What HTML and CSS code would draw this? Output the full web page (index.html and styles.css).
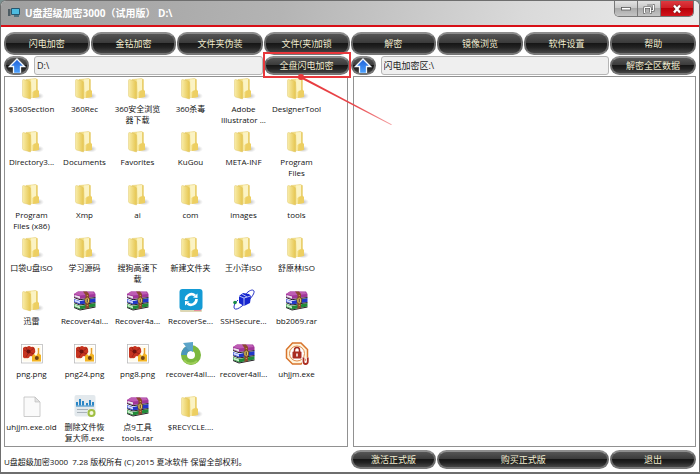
FILE: index.html
```html
<!DOCTYPE html>
<html lang="zh-CN">
<head>
<meta charset="utf-8">
<title>U盘超级加密3000</title>
<link rel="stylesheet" href="styles.css">
</head>
<body>
<svg class="defs" aria-hidden="true">
  <defs>
    <linearGradient id="gf" x1="0" x2="1"><stop offset="0" stop-color="#f9edaa"/><stop offset="1" stop-color="#e6c650"/></linearGradient>
    <linearGradient id="gb" x1="0" x2="1"><stop offset="0" stop-color="#eccf62"/><stop offset=".5" stop-color="#f8e9a0"/><stop offset="1" stop-color="#e8cb62"/></linearGradient>
    <linearGradient id="ga" x1="0" y1="0" x2="0" y2="1"><stop offset="0" stop-color="#1c5fd8"/><stop offset="1" stop-color="#4fa4ff"/></linearGradient>
    <linearGradient id="gl" x1="0" x2="1"><stop offset="0" stop-color="#e8383c"/><stop offset=".6" stop-color="#e8484c"/><stop offset="1" stop-color="#f4a0a2"/></linearGradient>
    <radialGradient id="gs"><stop offset="0" stop-color="#999" stop-opacity=".7"/><stop offset="1" stop-color="#bbb" stop-opacity="0"/></radialGradient>
  </defs>
  <symbol id="folder" viewBox="0 0 24 24">
    <ellipse cx="18" cy="19" rx="6" ry="3.500" fill="url(#gs)"/>
    <path d="M6 2.500L15.500 1.500L17.500 2.500V20L8 21Z" fill="url(#gb)" stroke="#e2c968" stroke-width=".4"/>
    <path d="M11 2.500L16 2V14L12 15Z" fill="#fbf3c4"/>
    <path d="M13.500 14L17.500 12.500L19 14V20L13 21Z" fill="#edcf62"/>
    <path d="M2.500 3.500Q2.500 2.500 3.500 2.500L9.500 4Q10.500 4.500 10.500 5.500V22L3.500 20Q2.500 19.500 2.500 18.500Z" fill="url(#gf)" stroke="#dcc05a" stroke-width=".4"/>
  </symbol>
  <symbol id="rar" viewBox="0 0 24 24">
    <path d="M1 5L5 2.500L21 2.500L22.500 5V8L7 10L1 8Z" fill="#a0369a"/><path d="M1 5L7 6.500L22 5L20 3L5 2.500Z" fill="#be5cb4"/><path d="M1.500 6L7 7.500V9.500L1.500 7.500Z" fill="#eee"/>
    <path d="M1 10L7 12L22.500 9V13L7 15.500L1 13Z" fill="#2137c8"/><path d="M1.500 10.500L7 12.500V14.500L1.500 12.500Z" fill="#d4dcff"/>
    <path d="M1 15L7 17L22.500 14V17.500L7 20.500L1 18Z" fill="#218b38"/><path d="M1.500 15.500L7 17.500V19.500L1.500 17.500Z" fill="#caf0ca"/>
    <path d="M1 8.500L7 10.700L22.500 8.500M1 13.700L7 16L22.500 13.500M1 18.500L7 21L22.500 18" fill="none" stroke="#242226" stroke-width="1"/>
    <path d="M10 2.500L14 2.500L16 5V19L12.500 20V6Z" fill="#8c4a2e"/><path d="M14.300 6V18" stroke="#d8ac50" stroke-width="1" stroke-dasharray="1 1"/>
    <rect x="12" y="9" width="4.500" height="5" rx="1" fill="#e8c55e" stroke="#5b381d" stroke-width=".7"/><path d="M14.200 10V13" stroke="#333"/>
  </symbol>
  <symbol id="png" viewBox="0 0 24 24">
    <rect x="1.500" y="2.500" width="21" height="18.500" fill="#fff" stroke="#b4b4b4" stroke-width=".7"/><rect x="3" y="4" width="18" height="15.500" fill="#fffbed"/>
    <path d="M3 6Q5 4 7 5Q9 3 11 5Q14 4 15 7Q16 10 14 12Q13 15 10 14Q9 17 6 16Q4 17 3 15Z" fill="#c63420"/><path d="M4 8L8 10L6 5M14 6L9 10L14 12M9 10L6 15" stroke="#8d1c14" stroke-width=".7" fill="none"/><circle cx="8.500" cy="9.500" r="2" fill="#6f120f"/>
    <path d="M12 14L14 12L16 14L18 11L21 13V19.500H12Z" fill="#f2b322"/><path d="M18.500 6V12" stroke="#e99e28" stroke-width="1.500"/><circle cx="16.800" cy="16" r="2" fill="#6f4318"/>
  </symbol>
  <symbol id="sync" viewBox="0 0 24 24">
    <rect x="1" y="20" width="22" height="3" rx="1" fill="#ddd7b4"/><path d="M15 21.500H22" stroke="#e68f9c"/>
    <rect x=".5" y="0" width="23" height="21" rx="3" fill="#149bd5"/><path d="M7 11A5.500 5.500 0 0 1 16 6.500M17.500 10A5.500 5.500 0 0 1 8.500 14.500" fill="none" stroke="#fff" stroke-width="2.600"/><path d="M14 8.500L18.500 9V4.500ZM10.500 12.500L6 12V16.500Z" fill="#fff"/>
  </symbol>
  <symbol id="ssh" viewBox="0 0 24 24">
    <path d="M13 6C17 1 21 0 22 2C23 5 17 12 10 17C5 21 2 21 2 18C2 15 4 13 6 11" fill="none" stroke="#2430c4" stroke-width="1"/>
    <path d="M7 7L11 4L17 5L19 7L18 14L12 17L7 14Z" fill="#1726cf"/><path d="M7 7L12 9L18.500 7M12 9V17M10 5L15 8" fill="none" stroke="#dbe4ff" stroke-width=".8"/><circle cx="3" cy="13.500" r="1.800" fill="#188c46"/>
  </symbol>
  <symbol id="ring" viewBox="0 0 24 24">
    <circle cx="12" cy="13" r="7" fill="none" stroke="#7cb83e" stroke-width="6"/><path d="M5 13A7 7 0 0 1 12 6" fill="none" stroke="#4b95bb" stroke-width="6"/><path d="M4 1L14 0L14 10L9 7.500Z" fill="#5ba4c8"/><path d="M5 18A8.500 8.500 0 0 0 18 19" fill="none" stroke="#9dce58" stroke-width="2"/>
  </symbol>
  <symbol id="lock" viewBox="0 0 24 24">
    <path d="M7.500 1H16L22.500 7.500V16L16 22H7.500L1.500 16V7.500Z" fill="#fff4dc" stroke="#d8742c" stroke-width="1.500"/><circle cx="12" cy="11.500" r="7.500" fill="#fff" stroke="#e08b4b"/>
    <path d="M9.500 10V8A2.500 2.500 0 0 1 14.500 8V10" fill="none" stroke="#a32c20" stroke-width="1.500"/><rect x="7.500" y="9.500" width="9" height="7" rx="1" fill="#a82d22"/><path d="M12 11.500V14.500" stroke="#fff" stroke-width="1.500"/>
    <path d="M18.500 15.500V19.500Q18.500 22 20.500 22Q22.800 22 22.800 19.500V15.500" fill="none" stroke="#fff" stroke-width="3.500"/><path d="M18.500 15.500V19.500Q18.500 22 20.500 22Q22.800 22 22.800 19.500V15.500" fill="none" stroke="#ac2e22" stroke-width="1.800"/>
  </symbol>
  <symbol id="doc" viewBox="0 0 24 24">
    <path d="M4 2H15L20 7V21.500H4Z" fill="#fafafa" stroke="#bfbfbf" stroke-width=".8"/><path d="M15 2V7H20Z" fill="#e2e2e2" stroke="#bfbfbf" stroke-width=".7"/>
  </symbol>
  <symbol id="chart" viewBox="0 0 24 24">
    <rect x="1.500" y="0" width="21" height="21.500" rx="2" fill="#e3e9ed"/><path d="M4 10.500V7M7 10.500V4M10 10.500V6M14 10.500V8M17 10.500V5M20 10.500V7" stroke="#2b86c6" stroke-width="2"/><path d="M3 11H21" stroke="#2b86c6"/><path d="M4 14.500H15M4 17.500H14" stroke="#a9b3ba" stroke-width="1"/><circle cx="18.500" cy="18" r="3" fill="#f5f7df" stroke="#a0bf42" stroke-width="2"/>
  </symbol>
  <symbol id="up" viewBox="0 0 18 16">
    <path d="M9 1L16.500 8.500H12.500V15.500H5.500V8.500H1.500Z" fill="url(#ga)" stroke="#f2f8ff" stroke-width="1.300"/>
  </symbol>
</svg>

<div class="window">
  <header class="titlebar">
    <svg class="app-icon" viewBox="0 0 12 10"><rect x="3" y="0" width="9" height="7" rx="1" fill="#27576f"/><rect x="4" y="1" width="7" height="5" fill="#4dbbe0"/><path d="M6 8H11" stroke="#356273" stroke-width="1.500"/><rect x="0" y="1" width="2.500" height="7" fill="#4e5c63"/></svg>
    <h1>U盘超级加密3000（试用版） D:\</h1>
    <div class="controls">
      <button aria-label="最小化"><svg viewBox="0 0 12 10"><rect x="1.500" y="3.500" width="9" height="2.500" fill="#fff" stroke="#555" stroke-width=".8"/></svg></button>
      <button aria-label="还原"><svg viewBox="0 0 12 10"><path d="M4.500 1H10.500V6.500H8.500M1.500 3.500H7.500V9H1.500Z" fill="none" stroke="#555" stroke-width="2"/><path d="M4.500 1H10.500V6.500H8.500M1.500 3.500H7.500V9H1.500Z" fill="none" stroke="#fff" stroke-width="1"/></svg></button>
      <button class="close" aria-label="关闭"><svg viewBox="0 0 12 10"><path d="M3 1.500L9 8.500M9 1.500L3 8.500" stroke="#722" stroke-width="3.500"/><path d="M3 1.500L9 8.500M9 1.500L3 8.500" stroke="#fff" stroke-width="2.300"/></svg></button>
    </div>
  </header>

  <nav class="toolbar">
    <button class="pill">闪电加密</button>
    <button class="pill">金钻加密</button>
    <button class="pill">文件夹伪装</button>
    <button class="pill">文件(夹)加锁</button>
    <button class="pill">解密</button>
    <button class="pill">镜像浏览</button>
    <button class="pill">软件设置</button>
    <button class="pill">帮助</button>
  </nav>

  <div class="paths">
    <div class="path">
      <button class="pill up" aria-label="上一级"><svg><use href="#up"/></svg></button>
      <input type="text" aria-label="磁盘路径" value="D:\">
      <div class="marked">
        <button class="pill">全盘闪电加密</button>
        <svg class="pointer" viewBox="0 0 96 54" aria-hidden="true"><circle cx="4" cy="4" r="3" fill="#e8383c"/><path d="M4 3L95 51.500L94 52L3 5Z" fill="url(#gl)"/></svg>
      </div>
    </div>
    <div class="path">
      <button class="pill up" aria-label="上一级"><svg><use href="#up"/></svg></button>
      <input type="text" aria-label="加密区路径" value="闪电加密区:\">
      <button class="pill">解密全区数据</button>
    </div>
  </div>

  <main class="panels">
    <ul class="panel files">
      <li><svg><use href="#folder"/></svg><span>$360Section</span></li>
      <li><svg><use href="#folder"/></svg><span>360Rec</span></li>
      <li><svg><use href="#folder"/></svg><span>360安全浏览<br>器下载</span></li>
      <li><svg><use href="#folder"/></svg><span>360杀毒</span></li>
      <li><svg><use href="#folder"/></svg><span>Adobe<br>Illustrator ...</span></li>
      <li><svg><use href="#folder"/></svg><span>DesignerTool</span></li>
      <li><svg><use href="#folder"/></svg><span>Directory3...</span></li>
      <li><svg><use href="#folder"/></svg><span>Documents</span></li>
      <li><svg><use href="#folder"/></svg><span>Favorites</span></li>
      <li><svg><use href="#folder"/></svg><span>KuGou</span></li>
      <li><svg><use href="#folder"/></svg><span>META-INF</span></li>
      <li><svg><use href="#folder"/></svg><span>Program<br>Files</span></li>
      <li><svg><use href="#folder"/></svg><span>Program<br>Files (x86)</span></li>
      <li><svg><use href="#folder"/></svg><span>Xmp</span></li>
      <li><svg><use href="#folder"/></svg><span>ai</span></li>
      <li><svg><use href="#folder"/></svg><span>com</span></li>
      <li><svg><use href="#folder"/></svg><span>images</span></li>
      <li><svg><use href="#folder"/></svg><span>tools</span></li>
      <li><svg><use href="#folder"/></svg><span>口袋U盘ISO</span></li>
      <li><svg><use href="#folder"/></svg><span>学习源码</span></li>
      <li><svg><use href="#folder"/></svg><span>搜狗高速下<br>载</span></li>
      <li><svg><use href="#folder"/></svg><span>新建文件夹</span></li>
      <li><svg><use href="#folder"/></svg><span>王小洋ISO</span></li>
      <li><svg><use href="#folder"/></svg><span>舒原林ISO</span></li>
      <li><svg><use href="#folder"/></svg><span>迅雷</span></li>
      <li><svg><use href="#rar"/></svg><span>Recover4al...</span></li>
      <li><svg><use href="#rar"/></svg><span>Recover4a...</span></li>
      <li><svg><use href="#sync"/></svg><span>RecoverSe...</span></li>
      <li><svg><use href="#ssh"/></svg><span>SSHSecure...</span></li>
      <li><svg><use href="#rar"/></svg><span>bb2069.rar</span></li>
      <li><svg><use href="#png"/></svg><span>png.png</span></li>
      <li><svg><use href="#png"/></svg><span>png24.png</span></li>
      <li><svg><use href="#png"/></svg><span>png8.png</span></li>
      <li><svg><use href="#ring"/></svg><span>recover4all....</span></li>
      <li><svg><use href="#rar"/></svg><span>recover4all...</span></li>
      <li><svg><use href="#lock"/></svg><span>uhjjm.exe</span></li>
      <li><svg><use href="#doc"/></svg><span>uhjjm.exe.old</span></li>
      <li><svg><use href="#chart"/></svg><span>删除文件恢<br>复大师.exe</span></li>
      <li><svg><use href="#rar"/></svg><span>点9工具<br>tools.rar</span></li>
      <li><svg><use href="#folder"/></svg><span>$RECYCLE....</span></li>
    </ul>
    <section class="panel" aria-label="闪电加密区"></section>
  </main>

  <footer class="footer">
    <p>U盘超级加密3000&nbsp; 7.28 版权所有 (C) 2015 夏冰软件 保留全部权利。</p>
    <div class="actions">
      <button class="pill">激活正式版</button>
      <button class="pill">购买正式版</button>
      <button class="pill">退出</button>
    </div>
  </footer>
</div>
</body>
</html>
```
FILE: styles.css
```css
* { box-sizing: border-box; }

body {
  margin: 0;
  background: #7b8f8f;
  font-family: "Open Sans", "Noto Sans CJK SC", sans-serif;
  font-size: 8px;
  color: #111;
}

.defs { position: absolute; width: 0; height: 0; }

.window {
  display: flex;
  flex-direction: column;
  min-height: 100vh;
  border: 1px solid #6e6e6e;
  border-bottom-width: 2px;
  border-radius: 6px 6px 0 0;
  background: #fff;
  overflow: hidden;
}

.titlebar {
  display: flex;
  align-items: center;
  height: 26px;
  padding: 0 5px 0 7px;
  border-bottom: 2px solid #d80f16;
  background: linear-gradient(100deg, #9f9f9f, #ababab 25%, #b4b4b4 40%, #dadada 75%, #ececec);
}

.app-icon { width: 12px; height: 10px; }

h1 {
  flex: 1;
  margin: 0 0 0 5px;
  font-size: 10px;
  line-height: 14px;
  color: #fff;
}

.controls {
  display: flex;
  align-self: flex-start;
  height: 16px;
  border: 1px solid #777;
  border-top: 0;
  border-radius: 0 0 5px 5px;
  overflow: hidden;
}

.controls button {
  display: grid;
  place-items: center;
  width: 23px;
  padding: 0;
  border: 0;
  border-right: 1px solid #777;
  background: linear-gradient(#e3e3e3, #c6c6c6 50%, #aaa 50%, #c4c4c4);
}

.controls .close {
  width: 32px;
  border-right: 0;
  background: linear-gradient(#dc3a40, #cf1b22 50%, #b80008 50%, #d2141c);
}

.controls svg { width: 12px; height: 10px; }

.toolbar {
  display: grid;
  grid-template-columns: repeat(8, 1fr);
  gap: 1px;
  padding: 5px 3px 1px;
}

.pill {
  height: 23px;
  padding: 0;
  border: 2px solid #777;
  border-color: #8d8d8d #686868 #777;
  border-radius: 10px;
  background: linear-gradient(#555, #3b3b3b 45%, #161616 50%, #222 70%, #474747);
  color: #f1ecd0;
  font: inherit;
  font-size: 9px;
  line-height: 16px;
  white-space: nowrap;
}

.paths {
  display: grid;
  grid-template-columns: 1fr 1fr;
  gap: 1px;
  padding: 0 3px;
}

.path { display: flex; }

.path .pill { width: 86px; height: 19px; line-height: 12px; }

.path .up {
  display: grid;
  place-items: center;
  width: 25px;
  margin-right: 5px;
  overflow: hidden;
}

.up svg { width: 18px; height: 16px; }

.path input {
  flex: 1;
  min-width: 0;
  height: 19px;
  margin-right: 1px;
  padding: 0 2px;
  border: 1px solid #b5b5b5;
  border-radius: 3px;
  background: #efefef;
  color: #222;
  font: inherit;
  font-size: 9px;
}

.marked { position: relative; }

.marked::after {
  content: "";
  position: absolute;
  inset: -4px -1px -3px;
  border: 2px solid #e8383c;
}

.pointer {
  position: absolute;
  z-index: 1;
  left: 33px;
  top: 17px;
  width: 96px;
  height: 54px;
}

.panels {
  display: grid;
  flex: 1;
  grid-template-columns: 1fr 1fr;
  gap: 5px;
  padding: 1px 3px 0;
}

.panel { border: 1px solid #919191; }

.files {
  display: grid;
  grid-template-columns: repeat(auto-fill, 53px);
  grid-auto-rows: 48px;
  row-gap: 5px;
  align-content: start;
  margin: 0;
  padding: 0;
  list-style: none;
}

.files li {
  display: flex;
  flex-direction: column;
  align-items: center;
  gap: 2px;
  text-align: center;
  line-height: 11px;
  white-space: nowrap;
}

.files svg { width: 24px; height: 24px; }

.footer {
  display: grid;
  grid-template-columns: 1fr 1fr;
  gap: 1px;
  align-items: center;
  padding: 3px;
}

.footer p { margin: 0; padding-top: 4px; line-height: 12px; }

.actions {
  display: grid;
  grid-template-columns: 1fr 2fr 1fr;
  gap: 1px;
}

.actions .pill { height: 19px; line-height: 12px; }
```
